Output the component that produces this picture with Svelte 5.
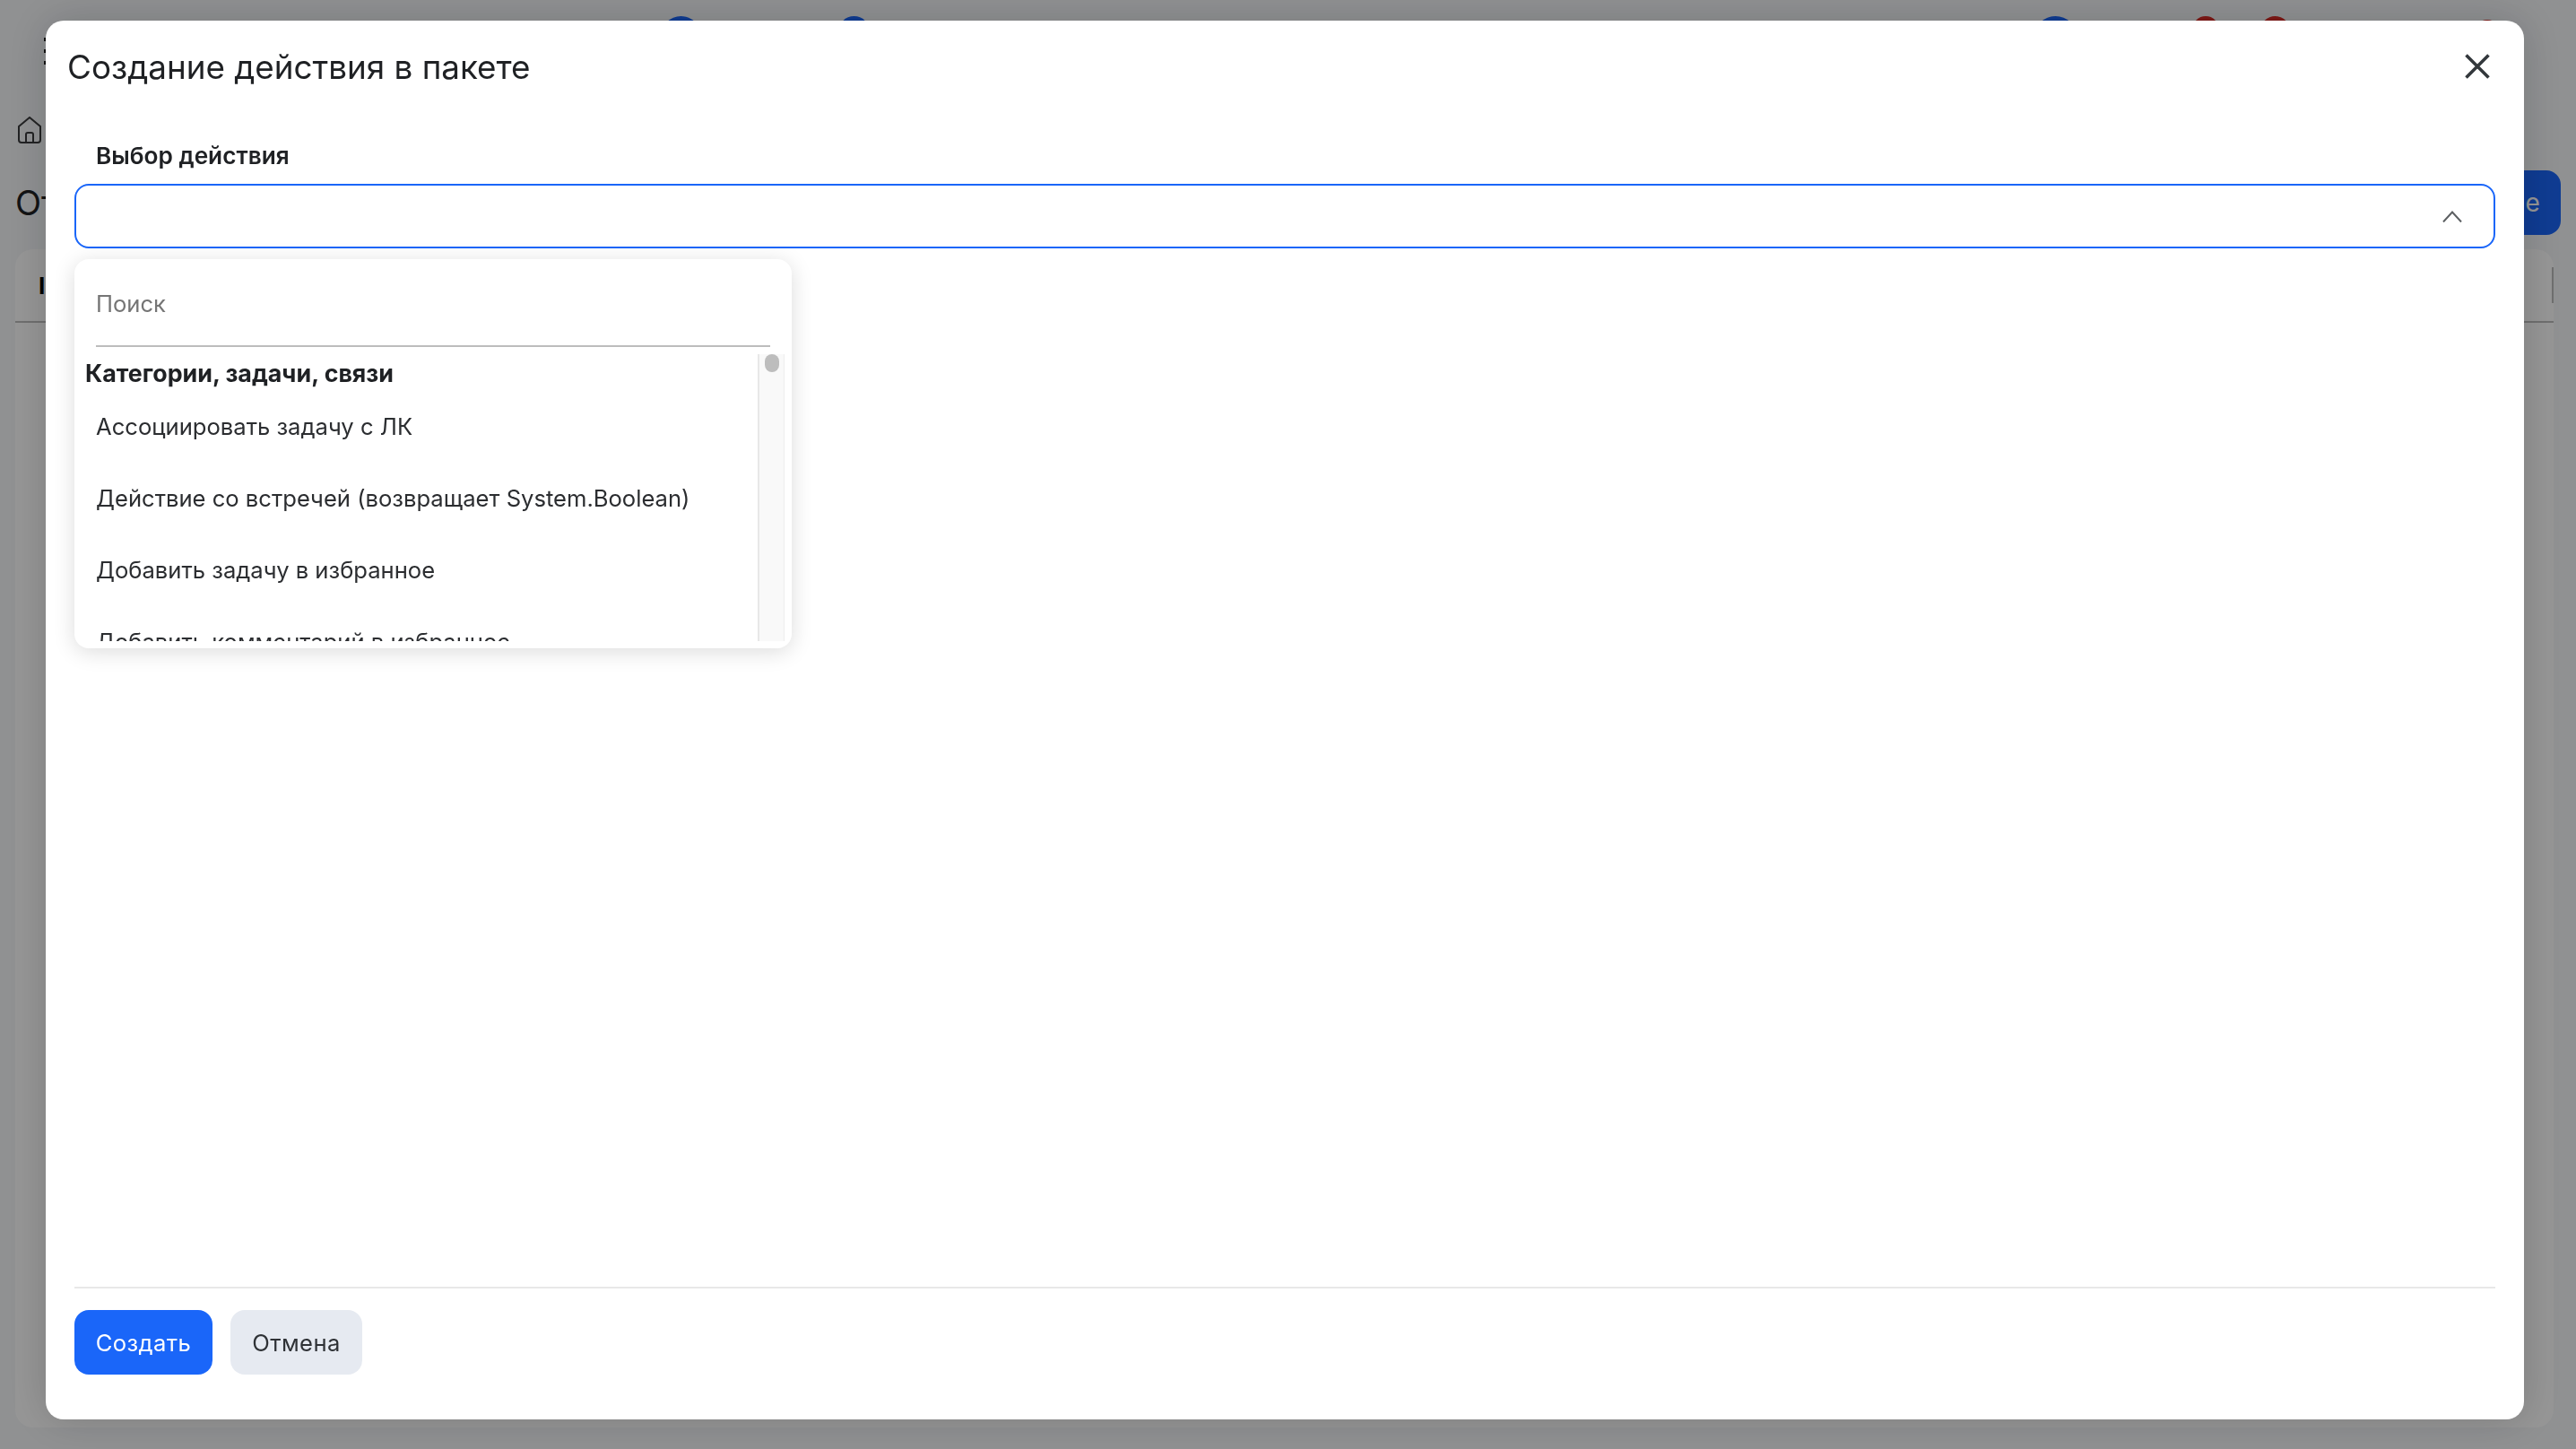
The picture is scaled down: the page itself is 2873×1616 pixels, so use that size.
<script lang="ts">
	const actions = [
		'Ассоциировать задачу с ЛК',
		'Действие со встречей (возвращает System.Boolean)',
		'Добавить задачу в избранное',
		'Добавить комментарий в избранное'
	];
</script>

<div class="page">
	<header class="topbar">
		<div class="menu-dots"><i></i><i></i><i></i></div>
		<span class="dot blue first"></span>
		<span class="dot blue second"></span>
		<span class="dot blue third"></span>
		<span class="dot red fourth"></span>
		<span class="dot red fifth"></span>
		<span class="dot red avatar"></span>
	</header>
	<div class="crumbs">
		<svg width="26" height="30" viewBox="0 0 26 30" fill="none" stroke="#3a3b3d" stroke-width="2">
			<path d="M1 11 13 1l12 10v15a3 3 0 0 1-3 3H4a3 3 0 0 1-3-3Z" />
			<path d="M9 29V20a2 2 0 0 1 2-2h4a2 2 0 0 1 2 2v9" />
		</svg>
	</div>
	<div class="page-head">
		<h2>Отчёты</h2>
		<button class="page-action">Создание</button>
	</div>
	<section class="table-card">
		<div class="table-head">
			<strong>ID</strong>
			<span class="col-rule"></span>
		</div>
	</section>
</div>

<div class="overlay"></div>

<div class="modal">
	<header class="modal-head">
		<h1>Создание действия в пакете</h1>
		<button class="close" aria-label="Закрыть">
			<svg width="28" height="28" viewBox="0 0 28 28" fill="none" stroke="#33383c" stroke-width="3.6">
				<path d="M1.500 1.500 26.500 26.500M26.500 1.500 1.500 26.500" />
			</svg>
		</button>
	</header>

	<div class="modal-body">
		<span class="field-label">Выбор действия</span>
		<div class="select">
			<svg width="22" height="13" viewBox="0 0 22 13" fill="none" stroke="#5c5f62" stroke-width="2">
				<path d="M1 12.500 11 1.500l10 11" />
			</svg>
		</div>

		<div class="dropdown">
			<div class="search">Поиск</div>
			<div class="list-wrap">
				<div class="list">
					<div class="group">Категории, задачи, связи</div>
					{#each actions as action}
						<div class="item">{action}</div>
					{/each}
				</div>
				<div class="scrollbar"><span class="thumb"></span></div>
			</div>
		</div>
	</div>

	<footer class="modal-foot">
		<button class="btn primary">Создать</button>
		<button class="btn secondary">Отмена</button>
	</footer>
</div>

<style>
	:global(body) {
		margin: 0;
		overflow: hidden;
		font-family: Inter, 'Noto Sans', sans-serif;
		background: #f5f7f9;
	}

	button {
		font-family: inherit;
		border: none;
		padding: 0;
		cursor: pointer;
	}

	.page {
		box-sizing: border-box;
		width: 2873px;
		height: 1616px;
		padding: 0 17px 24px;
		overflow: hidden;
		display: flex;
		flex-direction: column;
		background: #f5f7f9;
	}

	.topbar {
		display: flex;
		align-items: flex-start;
		height: 130px;
		padding-top: 18px;
		box-sizing: border-box;
		flex: none;
	}

	.menu-dots {
		display: grid;
		gap: 9px;
		padding: 24px 0 0 32px;
	}

	.menu-dots i {
		width: 4px;
		height: 4px;
		background: #222;
	}

	.dot {
		flex: none;
		width: 45px;
		height: 45px;
		border-radius: 50%;
	}

	.blue {
		background: #1a66f9;
	}

	.red {
		background: #d92b26;
	}

	.first {
		margin-left: 684px;
	}

	.second {
		margin-left: 153px;
		width: 35px;
		height: 35px;
	}

	.third {
		margin-left: 1299px;
		width: 47px;
	}

	.fourth {
		margin-left: 129px;
		width: 30px;
		height: 30px;
	}

	.fifth {
		margin-left: 46px;
		width: 33px;
		height: 33px;
	}

	.avatar {
		margin: 4px 0 0 206px;
		width: 28px;
		height: 28px;
	}

	.crumbs {
		height: 60px;
		padding-left: 3px;
		flex: none;
	}

	.page-head {
		display: flex;
		justify-content: space-between;
		align-items: center;
		height: 72px;
		flex: none;
	}

	h2 {
		margin: 0;
		font-size: 38px;
		font-weight: 400;
		color: #1f2124;
	}

	.page-action {
		width: 180px;
		height: 72px;
		border-radius: 16px;
		background: #1a66f9;
		color: #fff;
		font-size: 28px;
	}

	.table-card {
		flex: 1;
		margin-top: 16px;
		margin-right: 8px;
		border-radius: 20px;
		background: #fff;
	}

	.table-head {
		display: flex;
		justify-content: space-between;
		align-items: center;
		height: 80px;
		padding-left: 26px;
		font-size: 26px;
		border-bottom: 2px solid #bdbdbd;
	}

	.col-rule {
		width: 2px;
		height: 40px;
		background: #bdbdbd;
	}

	.overlay {
		position: fixed;
		inset: 0;
		background: rgba(0, 0, 0, 0.41);
	}

	.modal {
		position: fixed;
		left: 51px;
		top: 23px;
		width: 2764px;
		height: 1560px;
		box-sizing: border-box;
		display: flex;
		flex-direction: column;
		padding: 0 32px 0;
		border-radius: 20px;
		background: #fff;
		box-shadow: 0 0 48px rgba(0, 0, 0, 0.18);
	}

	.modal-head {
		display: flex;
		justify-content: space-between;
		align-items: center;
		height: 104px;
		margin-left: -8px;
		flex: none;
	}

	h1 {
		margin: -2px 0 0;
		font-size: 36.800px;
		font-weight: 400;
		color: #1f2124;
	}

	.close {
		display: flex;
		background: none;
		margin: -2px 6px 0 0;
	}

	.modal-body {
		position: relative;
		flex: 1;
		padding-top: 30px;
	}

	.field-label {
		display: block;
		padding-left: 24px;
		line-height: 34px;
		font-size: 26.200px;
		font-weight: 600;
		color: #1f2124;
	}

	.select {
		box-sizing: border-box;
		height: 72px;
		margin-top: 14px;
		padding-right: 35px;
		display: flex;
		justify-content: flex-end;
		align-items: center;
		border: 2px solid #1a66f9;
		border-radius: 16px;
	}

	.dropdown {
		position: absolute;
		left: 0;
		top: 162px;
		width: 800px;
		height: 434px;
		border-radius: 16px;
		background: #fff;
		box-shadow: 0 4px 24px rgba(0, 0, 0, 0.14);
	}

	.search {
		margin: 0 24px;
		height: 98px;
		box-sizing: border-box;
		padding-top: 32px;
		line-height: 36px;
		font-size: 25.600px;
		color: #757575;
		border-bottom: 2px solid #bdbdbd;
	}

	.list-wrap {
		display: flex;
		height: 320px;
		margin-top: 8px;
		padding-right: 8px;
	}

	.list {
		flex: 1;
		overflow: hidden;
	}

	.group {
		height: 40px;
		padding-left: 12px;
		line-height: 42px;
		font-size: 26.800px;
		font-weight: 700;
		color: #1f2124;
	}

	.item {
		height: 80px;
		padding-left: 24px;
		line-height: 82px;
		font-size: 25.600px;
		color: #2b2d30;
	}

	.scrollbar {
		flex: none;
		box-sizing: border-box;
		width: 30px;
		padding-left: 6px;
		background: #f9f9f9;
		border-left: 2px solid #e8e8e8;
		border-right: 1px solid #eee;
	}

	.thumb {
		display: block;
		width: 16px;
		height: 20px;
		border-radius: 8px;
		background: #bdbdbd;
	}

	.modal-foot {
		flex: none;
		display: flex;
		gap: 20px;
		height: 148px;
		padding-top: 24px;
		box-sizing: border-box;
		border-top: 2px solid #e8e8e8;
	}

	.btn {
		height: 72px;
		border-radius: 16px;
		font-size: 25.600px;
		letter-spacing: 0.4px;
	}

	.primary {
		width: 154px;
		background: #1a66f9;
		color: #fff;
	}

	.secondary {
		width: 147px;
		background: #e6eaf1;
		color: #2f3236;
	}
</style>
